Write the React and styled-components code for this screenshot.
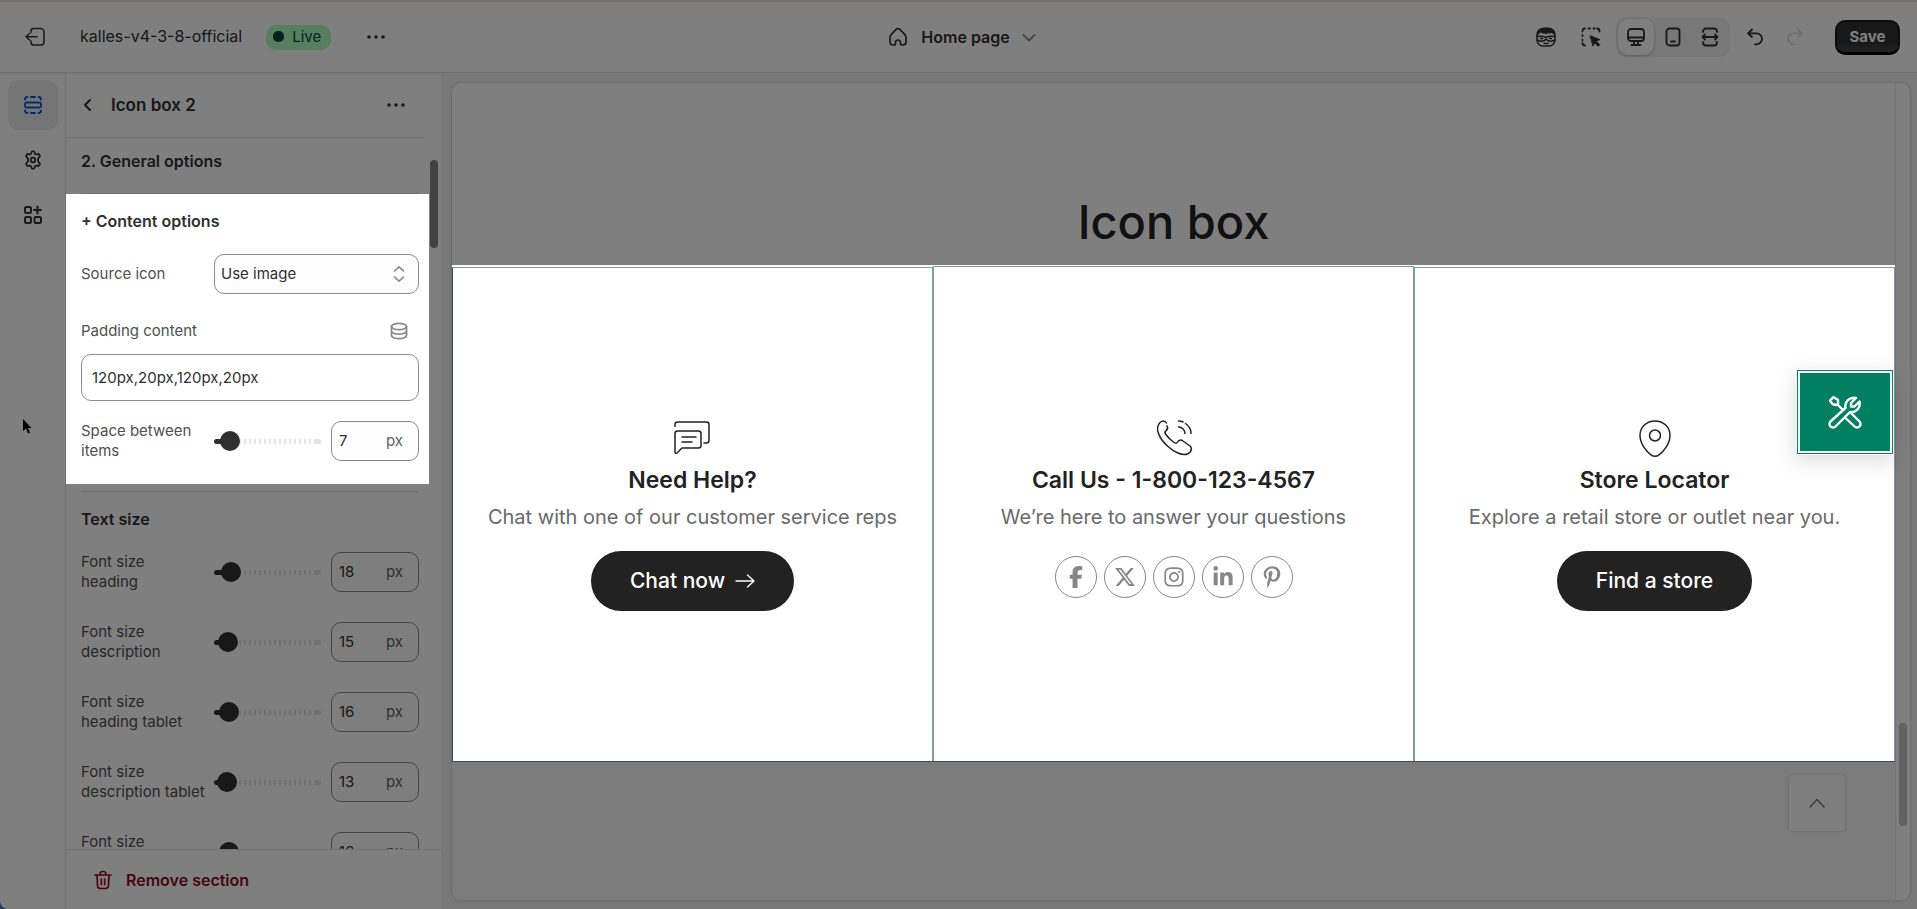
import React, { useState } from 'react';
import styled, { createGlobalStyle, css } from 'styled-components';
import {
  FaFacebookF,
  FaInstagram,
  FaLinkedinIn,
  FaPinterestP,
  FaXTwitter,
} from 'react-icons/fa6';

const GlobalStyle = createGlobalStyle`
  * {
    box-sizing: border-box;
  }
  body {
    margin: 0;
    background: #3a76b8;
    color: #303030;
    font-family: Inter, 'Liberation Sans', sans-serif;
    font-size: 15px;
    line-height: 20px;
  }
  button, input, select {
    font: inherit;
    color: inherit;
  }
  h1, h2, h3, p {
    margin: 0;
  }
`;

const Shell = styled.div`
  height: 100vh;
  display: flex;
  flex-direction: column;
  overflow: hidden;
  background: #fff;
  border-radius: 0 0 0 8px;
`;

// everything without lit sits under the scrim
const Scrim = styled.div`
  position: fixed;
  inset: 0;
  z-index: 1;
  background: rgba(0, 0, 0, 0.5);
  pointer-events: none;
`;

const lit = css`
  position: relative;
  z-index: 2;
`;

const Svg = styled.svg`
  display: block;
  flex: none;
  fill: none;
  stroke: currentColor;
  stroke-width: ${(props) => props.$weight || 1.5};
  stroke-linecap: round;
  stroke-linejoin: round;
`;

const Icon = ({ size = 20, box = 20, weight, children }) => (
  <Svg
    width={size}
    height={size}
    viewBox={`0 0 ${box} ${box}`}
    $weight={weight}
    aria-hidden="true"
  >
    {children}
  </Svg>
);

const IconButton = styled.button`
  width: ${(props) => props.$size || 36}px;
  height: ${(props) => props.$size || 36}px;
  padding: 0;
  display: flex;
  align-items: center;
  justify-content: center;
  border: 0;
  border-radius: 10px;
  background: ${(props) => props.$bg || 'transparent'};
  color: ${(props) => props.$color || '#303030'};
  box-shadow: ${(props) => (props.$raised ? '0 1px 3px rgba(0, 0, 0, 0.25)' : 'none')};
  cursor: pointer;
`;

const Dots = () => (
  <Icon>
    <g fill="currentColor" stroke="none">
      <circle cx="3" cy="10" r="1.8" />
      <circle cx="10" cy="10" r="1.8" />
      <circle cx="17" cy="10" r="1.8" />
    </g>
  </Icon>
);

/* top bar */

const TopBar = styled.header`
  flex: none;
  height: 73px;
  padding: 0 17px 0 17px;
  display: grid;
  grid-template-columns: 1fr auto 1fr;
  align-items: center;
  border-top: 2px solid #f1e4de;
  border-bottom: 1px solid #dcdcdc;
  box-shadow: 0 1px 2px rgba(0, 0, 0, 0.08);
`;

const BarSide = styled.div`
  display: flex;
  align-items: center;
  justify-content: ${(props) => (props.$end ? 'flex-end' : 'flex-start')};
`;

const ThemeName = styled.span`
  margin: 0 24px 2px 27px;
  font-size: 16px;
`;

const Live = styled.span`
  height: 25px;
  margin-right: 27px;
  padding: 0 10px 1px 7px;
  display: flex;
  align-items: center;
  gap: 8px;
  border-radius: 10px;
  background: #affebf;
  color: #014b40;

  &::before {
    content: '';
    width: 11px;
    height: 11px;
    border-radius: 5px;
    background: #014b40;
  }
`;

const PageButton = styled.button`
  margin-left: 10px;
  padding: 0;
  display: flex;
  align-items: center;
  gap: 13px;
  border: 0;
  background: none;
  font-size: 16px;
  font-weight: 600;
  cursor: pointer;
`;

const PageName = styled.span`
  margin-right: -4px;
`;

const Devices = styled.div`
  height: 40px;
  margin: 0 7px;
  padding: 0 2px;
  display: flex;
  align-items: center;
  gap: 1px;
  border-radius: 10px;
  background: #f0f0f0;
`;

const Tools = styled.div`
  display: flex;
  gap: 9px;
`;

const History = styled.div`
  margin-right: 22px;
  display: flex;
  gap: 4px;
`;

const Save = styled.button`
  width: 65px;
  height: 35px;
  padding: 0;
  border: 2px solid #1a1a1a;
  border-bottom: 3px solid #000;
  border-radius: 10px;
  background: linear-gradient(#303030, #303030 70%, #484848);
  color: #fff;
  font-weight: 700;
  line-height: 16px;
  cursor: pointer;
`;

/* left side */

const Main = styled.div`
  flex: 1;
  min-height: 0;
  display: flex;
`;

const Rail = styled.nav`
  width: 66px;
  padding-top: 7px;
  display: flex;
  flex-direction: column;
  align-items: center;
  gap: 5px;
  border-right: 1px solid #e3e3e3;
`;

const Cursor = styled.svg`
  position: absolute;
  left: 21px;
  top: 418px;
`;

const Panel = styled.aside`
  width: 376px;
  display: flex;
  flex-direction: column;
  border-right: 1px solid #e8e8e8;
`;

const PanelHead = styled.div`
  height: 65px;
  margin-right: 15px;
  padding: 0 12px 0 13px;
  display: flex;
  align-items: center;
  gap: 14px;
  border-bottom: 1px solid #e3e3e3;

  h1 {
    flex: 1;
    font-size: 17px;
    font-weight: 600;
  }
`;

const PanelBody = styled.div`
  flex: 1;
  min-height: 0;
  display: flex;
  overflow: hidden;
`;

const Options = styled.div`
  width: 363px;
`;

const Group = styled.section`
  padding: ${(props) => props.$pad};

  h2 {
    font-size: 16px;
    font-weight: 600;
  }
`;

const LitGroup = styled(Group)`
  ${lit}
  background: #fff;
`;

const Divider = styled.hr`
  height: 1px;
  margin: ${(props) => props.$top || 0}px 10px 0 15px;
  border: 0;
  background: #dedede;
`;

const ScrollTrack = styled.div`
  padding: 22px 0 0 1px;
`;

const ScrollThumb = styled.div`
  width: 8px;
  height: ${(props) => props.$height}px;
  border-radius: 4px;
  background: ${(props) => props.$color};
`;

const FieldLabel = styled.label`
  color: #4f4f4f;
  white-space: pre-line;
`;

const FieldRow = styled.div`
  min-height: 40px;
  margin-top: ${(props) => props.$top || 0}px;
  display: grid;
  grid-template-columns: 133px 1fr;
  align-items: center;
`;

const SelectBox = styled.div`
  position: relative;
  color: #303030;

  svg {
    position: absolute;
    right: 10px;
    top: 10px;
    color: #8a8a8a;
    pointer-events: none;
  }
`;

const Select = styled.select`
  width: 100%;
  height: 40px;
  padding: 0 6px;
  border: 1px solid #8a8a8a;
  border-radius: 10px;
  background: #fdfdfd;
  appearance: none;
`;

const LabelLine = styled.div`
  margin: 27px 0 13px;
  display: flex;
  align-items: center;
  justify-content: space-between;
  padding-right: 10px;
  color: #8a8a8a;
`;

const TextInput = styled.input`
  width: 100%;
  height: 47px;
  padding: 0 10px;
  display: block;
  border: 1px solid #8a8a8a;
  border-radius: 10px;
  background: #fff;
`;

const SliderRow = styled.div`
  min-height: 40px;
  margin-top: ${(props) => props.$top}px;
  display: grid;
  grid-template-columns: 133px 1fr 88px;
  align-items: center;
`;

const Slider = styled.input`
  width: calc(100% - 10px);
  height: 20px;
  margin: 0;
  appearance: none;
  background: none;

  &::-webkit-slider-runnable-track {
    height: 5px;
    border-radius: 3px;
    background: linear-gradient(#303030, #303030) 0 0 / var(--fill) 5px no-repeat,
      linear-gradient(#e3e3e3, #e3e3e3) 100% 0 / 7px 5px no-repeat,
      repeating-linear-gradient(90deg, #e3e3e3 0 2px, transparent 2px 5px);
  }
  &::-webkit-slider-thumb {
    width: 20px;
    height: 20px;
    margin-top: -8px;
    appearance: none;
    border-radius: 50%;
    background: #303030;
  }
`;

const NumberBox = styled.div`
  height: 40px;
  padding: 0 15px 0 7px;
  display: flex;
  align-items: center;
  border: 1px solid #8a8a8a;
  border-radius: 10px;
  background: #fdfdfd;
  color: #616161;

  input {
    flex: 1;
    min-width: 0;
    padding: 0;
    border: 0;
    background: none;
    color: #303030;
    outline: none;
  }
`;

const PanelFoot = styled.div`
  height: 60px;
  padding-left: 27px;
  display: flex;
  align-items: center;
  border-top: 1px solid #e3e3e3;
`;

const RemoveButton = styled.button`
  padding: 0;
  display: flex;
  align-items: center;
  gap: 13px;
  border: 0;
  background: none;
  color: #8e0b21;
  font-size: 16px;
  font-weight: 600;
  cursor: pointer;
`;

/* preview */

const Stage = styled.main`
  flex: 1;
  min-width: 0;
  padding: 10px 7px 9px 10px;
  display: flex;
  background: #f1f1f1;
`;

const Frame = styled.div`
  position: relative;
  flex: 1;
  display: flex;
  border-radius: 9px;
  background: #fff;
  box-shadow: 0 0 3px rgba(0, 0, 0, 0.25);
`;

const Site = styled.div`
  flex: 1;
  display: flex;
  flex-direction: column;
  font-family: Inter, sans-serif;
  color: #222;
`;

const SiteHead = styled.div`
  height: 182px;
  padding-bottom: 15px;
  display: flex;
  align-items: flex-end;
  justify-content: center;

  h2 {
    font-size: 47px;
    font-weight: 500;
    line-height: 56px;
  }
`;

const Boxes = styled.div`
  ${lit}
  height: 497px;
  padding-top: 1px;
  display: grid;
  grid-template-columns: repeat(3, 1fr);
  background: #fff;
  border-bottom: 1px solid #414c55;
`;

const Box = styled.article`
  margin-top: ${(props) => (props.$selected ? 0 : 1)}px;
  display: flex;
  flex-direction: column;
  align-items: center;
  justify-content: center;
  border: solid #7f9baa;
  border-width: 1px 1px 0;

  &:first-child {
    border-left-color: #414c55;
  }

  h3 {
    margin: 7px 0 8px;
    font-size: 23px;
    font-weight: 600;
    line-height: 30px;
  }
  p {
    color: #696969;
    font-size: 20px;
    line-height: 28px;
  }
`;

const BoxAction = styled.div`
  height: 60px;
  margin-top: 20px;
  display: flex;
  align-items: center;
  gap: 7px;
`;

const Pill = styled.a`
  height: 60px;
  padding: 0 39px;
  display: flex;
  align-items: center;
  gap: 10px;
  border-radius: 30px;
  background: #222;
  color: #fff;
  font-size: 21px;
  font-weight: 500;
  text-decoration: none;
`;

const Social = styled.a`
  width: 42px;
  height: 42px;
  margin-top: -8px;
  display: flex;
  align-items: center;
  justify-content: center;
  border: 1px solid #878787;
  border-radius: 50%;
  color: #878787;
  font-size: 22px;
`;

const SiteFoot = styled.div`
  flex: 1;
  padding: 13px 50px 0;
  display: flex;
  justify-content: flex-end;
  background: #f6f6f6;
  border-radius: 0 0 0 9px;
`;

const BackToTop = styled.button`
  width: 56px;
  height: 56px;
  display: flex;
  align-items: center;
  justify-content: center;
  border: 0;
  border-radius: 4px;
  background: #fff;
  color: #777;
  box-shadow: 0 0 3px rgba(0, 0, 0, 0.2);
`;

const SiteScroll = styled.div`
  width: 15px;
  padding: 0 3px 74px;
  display: flex;
  align-items: flex-end;
  border-left: 1px solid #e8e8e8;
`;

const ToolsBadge = styled.button`
  position: absolute;
  z-index: 3;
  top: 290px;
  right: 20px;
  width: 90px;
  height: 78px;
  padding: 0;
  display: flex;
  align-items: center;
  justify-content: center;
  border: 0;
  background: #008060;
  color: #fff;
  box-shadow: 0 0 0 2px #fff, 0 0 0 3px #008060, 0 0 0 4px #fff,
    0 6px 20px 4px rgba(0, 0, 0, 0.15);
`;

const sizes = [
  { id: 'heading', label: 'Font size\nheading', value: 18 },
  { id: 'description', label: 'Font size\ndescription', value: 15 },
  { id: 'heading-tablet', label: 'Font size\nheading tablet', value: 16 },
  { id: 'description-tablet', label: 'Font size\ndescription tablet', value: 13 },
  { id: 'heading-mobile', label: 'Font size\nheading mobile', value: 16 },
];

const socials = [
  { name: 'Facebook', Glyph: FaFacebookF },
  { name: 'X', Glyph: FaXTwitter },
  { name: 'Instagram', Glyph: FaInstagram },
  { name: 'LinkedIn', Glyph: FaLinkedinIn },
  { name: 'Pinterest', Glyph: FaPinterestP },
];

const SliderField = ({ id, label, initial, min, top }) => {
  const [value, setValue] = useState(initial);
  const onChange = (e) => setValue(Number(e.target.value));

  return (
    <SliderRow $top={top}>
      <FieldLabel htmlFor={id}>{label}</FieldLabel>
      <Slider
        type="range"
        aria-label={label}
        min={min}
        max={min + 100}
        value={value}
        onChange={onChange}
        style={{ '--fill': `${value - min + 8}%` }}
      />
      <NumberBox>
        <input id={id} inputMode="numeric" value={value} onChange={onChange} />
        <span>px</span>
      </NumberBox>
    </SliderRow>
  );
};

const Header = () => (
  <TopBar>
    <BarSide>
      <IconButton aria-label="Exit">
        <Icon>
          <path d="M6 5.5V4a2.5 2.5 0 0 1 2.5-2.5h7A3.5 3.5 0 0 1 19 5v10a3 3 0 0 1-3 3H8.5A2.5 2.5 0 0 1 6 15.5V14M12 9.75H1M4.5 6.5 1 9.75 4.5 13" />
        </Icon>
      </IconButton>
      <ThemeName>kalles-v4-3-8-official</ThemeName>
      <Live>Live</Live>
      <IconButton aria-label="More actions">
        <Dots />
      </IconButton>
    </BarSide>
    <PageButton>
      <Icon weight={1.7}>
        <path d="M2 10.5c0-1.5.4-2.2 1.3-3.1l4.9-5a2.5 2.5 0 0 1 3.6 0l4.9 5c.9.9 1.3 1.6 1.3 3.1V15a3 3 0 0 1-3 3h-1.5a1 1 0 0 1-1-1v-1.5a2.5 2.5 0 0 0-5 0V17a1 1 0 0 1-1 1H5a3 3 0 0 1-3-3Z" />
      </Icon>
      <PageName>Home page</PageName>
      <Icon>
        <path d="m4.5 8 5.500 5.500L15.500 8" stroke="#8a8a8a" strokeWidth="1.8" />
      </Icon>
    </PageButton>
    <BarSide $end>
      <Tools>
        <IconButton aria-label="Sidekick">
          <Icon weight={1.4}>
            <rect x="1" y="1.5" width="18" height="17.5" rx="6" />
            <path
              d="M1.5 8C1 3 4 1 10 1s9 2 8.500 7c-1-1.500-2-2-3-2.500-1 1-2 1-3 0-1.500 1.500-3 1.500-4 .5C7 6.500 5.500 5.500 5 5c-1 .5-3 1.500-3.500 3Z"
              fill="currentColor"
              strokeWidth="0.8"
            />
            <path d="M1 9.500c3-.5 6-.5 9 .8 3-1.300 6-1.300 9-.8M1 13c4 2 7 1.500 9-1 2 2.500 5 3 9 1M4.500 11.500h2M13.500 11.500h2M8 16.200c1.500.7 2.500.7 4 0" />
          </Icon>
        </IconButton>
        <IconButton aria-label="Inspector">
          <Icon weight={1.8}>
            <path d="M1.5 4.500V4A2.500 2.500 0 0 1 4 1.500M7.500 1.500H9M12.500 1.500h1M16 1.500A2.500 2.500 0 0 1 18.500 4v.5M1.500 8v1M1.500 12.500v1M4 18.500A2.500 2.500 0 0 1 1.500 16" />
            <path
              d="m9.500 9 9.300 3.600-3.600 1.600 3.600 3.500-1.600 1.600-3.600-3.500-1.500 3Z"
              fill="currentColor"
              strokeWidth="1"
            />
          </Icon>
        </IconButton>
      </Tools>
      <Devices>
        <IconButton $bg="#fff" $raised aria-label="Desktop">
          <Icon weight={1.8}>
            <rect x="2" y="2" width="16" height="12" rx="3" />
            <path d="M2.5 10.500h15M8 14v3.500M12 14v3.500M5.500 18h9" />
          </Icon>
        </IconButton>
        <IconButton aria-label="Mobile">
          <Icon weight={1.8}>
            <rect x="3.5" y="1.5" width="13" height="17" rx="3" />
            <path d="M8 14.500h4" />
          </Icon>
        </IconButton>
        <IconButton aria-label="Full width">
          <Icon weight={1.8}>
            <path d="M3 5v-.5a3 3 0 0 1 3-3h8a3 3 0 0 1 3 3V5M3 15v.5a3 3 0 0 0 3 3h8a3 3 0 0 0 3-3V15M2.500 10h15M5 7.500 2.500 10 5 12.500M15 7.500l2.500 2.500-2.500 2.500" />
          </Icon>
        </IconButton>
      </Devices>
      <History>
        <IconButton aria-label="Undo">
          <Icon weight={1.8}>
            <path d="M7 2.500 3 6.300 7 10M3.300 6.300h8.200a5.500 5.500 0 0 1 0 11H10" />
          </Icon>
        </IconButton>
        <IconButton $color="#dcdcdc" aria-label="Redo" disabled>
          <Icon weight={1.8}>
            <path d="m13 2.500 4 3.800L13 10M16.700 6.300H8.500a5.500 5.500 0 0 0 0 11H10" />
          </Icon>
        </IconButton>
      </History>
      <Save>Save</Save>
    </BarSide>
  </TopBar>
);

const Sidebar = () => (
  <Panel>
    <PanelHead>
      <IconButton $size={18} aria-label="Back">
        <Icon weight={2}>
          <path d="M12 5 7 10l5 5" />
        </Icon>
      </IconButton>
      <h1>Icon box 2</h1>
      <IconButton aria-label="Section actions">
        <Dots />
      </IconButton>
    </PanelHead>
    <PanelBody>
      <Options>
        <Group $pad="13px 15px 22px">
          <h2>2. General options</h2>
        </Group>
        <Divider />
        <LitGroup $pad="17px 10px 23px 15px">
          <h2>+ Content options</h2>
          <FieldRow $top={23}>
            <FieldLabel htmlFor="source">Source icon</FieldLabel>
            <SelectBox>
              <Select id="source" defaultValue="image">
                <option value="image">Use image</option>
                <option value="icon">Use icon</option>
              </Select>
              <Icon weight={1.7}>
                <path d="M5.5 7 10 2.800 14.500 7M5.500 13l4.500 4.200 4.500-4.200" />
              </Icon>
            </SelectBox>
          </FieldRow>
          <LabelLine>
            <FieldLabel htmlFor="padding">Padding content</FieldLabel>
            <Icon weight={1.8}>
              <ellipse cx="10" cy="5.5" rx="7.5" ry="3.2" />
              <path d="M2.5 5.500v9c0 1.800 3.400 3.200 7.500 3.200s7.500-1.400 7.500-3.200v-9M2.500 10c0 1.800 3.400 3.200 7.500 3.200s7.500-1.400 7.500-3.200" />
            </Icon>
          </LabelLine>
          <TextInput id="padding" defaultValue="120px,20px,120px,20px" />
          <SliderField id="space" label="Space between items" initial={7} min={0} top={20} />
        </LitGroup>
        <Divider $top={7} />
        <Group $pad="17px 10px 0 15px">
          <h2>Text size</h2>
          {sizes.map((size, i) => (
            <SliderField
              key={size.id}
              id={size.id}
              label={size.label}
              initial={size.value}
              min={10}
              top={i === 0 ? 23 : 30}
            />
          ))}
        </Group>
      </Options>
      <ScrollTrack>
        <ScrollThumb $height={88} $color="#858585" />
      </ScrollTrack>
    </PanelBody>
    <PanelFoot>
      <RemoveButton>
        <Icon weight={1.7}>
          <path d="M2 5h16M7 5V4a2.500 2.500 0 0 1 2.500-2.500h1A2.500 2.500 0 0 1 13 4v1M4 5l.5 10.500a3 3 0 0 0 3 3h5a3 3 0 0 0 3-3L16 5M8.300 9v5.500M11.700 9v5.500" />
        </Icon>
        Remove section
      </RemoveButton>
    </PanelFoot>
  </Panel>
);

const Preview = () => (
  <Stage>
    <Frame>
      <Site>
        <SiteHead>
          <h2>Icon box</h2>
        </SiteHead>
        <Boxes>
          <Box>
            <Icon size={40} box={40} weight={1.5}>
              <path d="M2 8.500v-2A2.500 2.500 0 0 1 4.500 4h29A2.500 2.500 0 0 1 36 6.500v16a2.500 2.500 0 0 1-2.500 2.500H31" />
              <path d="M4.500 13h21a2.500 2.500 0 0 1 2.500 2.500v12a2.500 2.500 0 0 1-2.500 2.500H9l-5 5c-1 .7-2 .5-2-1V15.500A2.500 2.500 0 0 1 4.500 13ZM9 19h14M9 24h10" />
            </Icon>
            <h3>Need Help?</h3>
            <p>Chat with one of our customer service reps</p>
            <BoxAction>
              <Pill href="#chat">
                Chat now
                <Icon weight={1.3}>
                  <path d="M1 10h18M12.500 4l6.500 6-6.500 6" />
                </Icon>
              </Pill>
            </BoxAction>
          </Box>
          <Box $selected>
            <Icon size={40} box={40} weight={1.5}>
              <path d="M12.500 5C11 2.200 8 2.500 6 4.500c-6 6 0 17 8 24 6 5.500 14 9.500 19.500 7.500 4-1.500 5-6 2.500-8l-7-5c-2-1.500-4.500-1-5.500 1-.8 1.500-2 1.500-3.500.5-3-2-6-5-8.500-8.500-1-1.200-.5-2.200.5-3.200 2-1.800 2-3.500 1-5M24.500 3c2 0 3 .3 4.500 1M31.500 5.500C35 8 37 11.500 37 15.500M24.500 9c3.500 0 6.500 3 6.500 6.500" />
            </Icon>
            <h3>Call Us - 1-800-123-4567</h3>
            <p>We’re here to answer your questions</p>
            <BoxAction>
              {socials.map(({ name, Glyph }) => (
                <Social key={name} href="#social" aria-label={name}>
                  <Glyph />
                </Social>
              ))}
            </BoxAction>
          </Box>
          <Box>
            <Icon size={40} box={40} weight={1.5}>
              <path d="M20 3C11.500 3 5 9 5 17.500 5 26 11.500 33.500 16 36.800c2.500 1.900 5.500 1.900 8 0C28.500 33.500 35 26 35 17.500 35 9 28.500 3 20 3Z" />
              <circle cx="20" cy="17.5" r="5.5" />
            </Icon>
            <h3>Store Locator</h3>
            <p>Explore a retail store or outlet near you.</p>
            <BoxAction>
              <Pill href="#stores">Find a store</Pill>
            </BoxAction>
          </Box>
        </Boxes>
        <SiteFoot>
          <BackToTop aria-label="Back to top">
            <Icon weight={1.5}>
              <path d="m3 14 7-7.500 7 7.500" />
            </Icon>
          </BackToTop>
        </SiteFoot>
      </Site>
      <SiteScroll>
        <ScrollThumb $height={103} $color="#c4c4c4" />
      </SiteScroll>
      <ToolsBadge aria-label="Theme tools">
        <Icon size={36} box={36} weight={2.4}>
          <path d="M3 6.500 6.500 3l4.500 3v4.500L9 11l-3.500-1ZM10.500 10.500l5 5" />
          <path d="M3.500 27.500 18.500 14c-1-6 4-11.500 10.500-10l-5 5v3.500h3.500l5-5c1.500 6.500-4 11.500-9.500 10.500L8.500 32.500a3.500 3.500 0 0 1-5-5Z" />
          <path d="m24.500 19.500 8 8a3.500 3.500 0 0 1-5 5l-8.500-8" />
        </Icon>
      </ToolsBadge>
    </Frame>
  </Stage>
);

const App = () => (
  <>
    <GlobalStyle />
    <Shell>
      <Header />
      <Main>
        <Rail>
          <IconButton $size={50} $bg="#ebebeb" $color="#005bd3" aria-label="Sections">
            <Icon weight={1.8}>
              <rect x="2" y="7.5" width="16" height="5" rx="1.5" />
              <path d="M2 4.500A2.500 2.500 0 0 1 4.500 2M8 2h4M15.500 2A2.500 2.500 0 0 1 18 4.500M2 15.500A2.500 2.500 0 0 0 4.500 18M8 18h4M15.500 18a2.500 2.500 0 0 0 2.500-2.500" />
            </Icon>
          </IconButton>
          <IconButton $size={50} aria-label="Theme settings">
            <Icon weight={1.8}>
              <path d="M8.2 3.200C8.400 2 9 1.200 10 1.200s1.600.8 1.800 2c.2 1 1.200 1.500 2.100 1.100 1.200-.5 2.100-.3 2.700.6s.2 1.800-.7 2.600c-.8.7-1 1.500-.9 2.500 0 1 .2 1.800.9 2.500.9.8 1.200 1.700.7 2.600-.6.9-1.500 1.100-2.700.6-.9-.4-1.900.1-2.100 1.100-.2 1.200-.8 2-1.800 2s-1.600-.8-1.800-2c-.2-1-1.200-1.500-2.100-1.100-1.200.5-2.100.3-2.700-.6-.5-.9-.2-1.800.7-2.600.7-.7.9-1.500.9-2.500s-.2-1.800-.9-2.500c-.9-.8-1.200-1.700-.7-2.600.6-.9 1.500-1.100 2.700-.6.9.4 1.900-.1 2.100-1.100Z" />
              <circle cx="10" cy="10" r="2.3" />
            </Icon>
          </IconButton>
          <IconButton $size={50} aria-label="App embeds">
            <Icon weight={2}>
              <rect x="2" y="2" width="6" height="6" rx="1.5" />
              <rect x="2" y="12" width="6" height="6" rx="1.5" />
              <rect x="11.5" y="12" width="6.5" height="6" rx="1.5" />
              <path d="M14.5 1.500v7M11 5h7" />
            </Icon>
          </IconButton>
        </Rail>
        <Sidebar />
        <Preview />
      </Main>
    </Shell>
    <Scrim />
    <Cursor width="12" height="18" viewBox="0 0 12 18" aria-hidden="true">
      <path d="M2 1v12l3-2.500 2 5 2-1-2-4.500h3.500Z" />
    </Cursor>
  </>
);

export default App;
